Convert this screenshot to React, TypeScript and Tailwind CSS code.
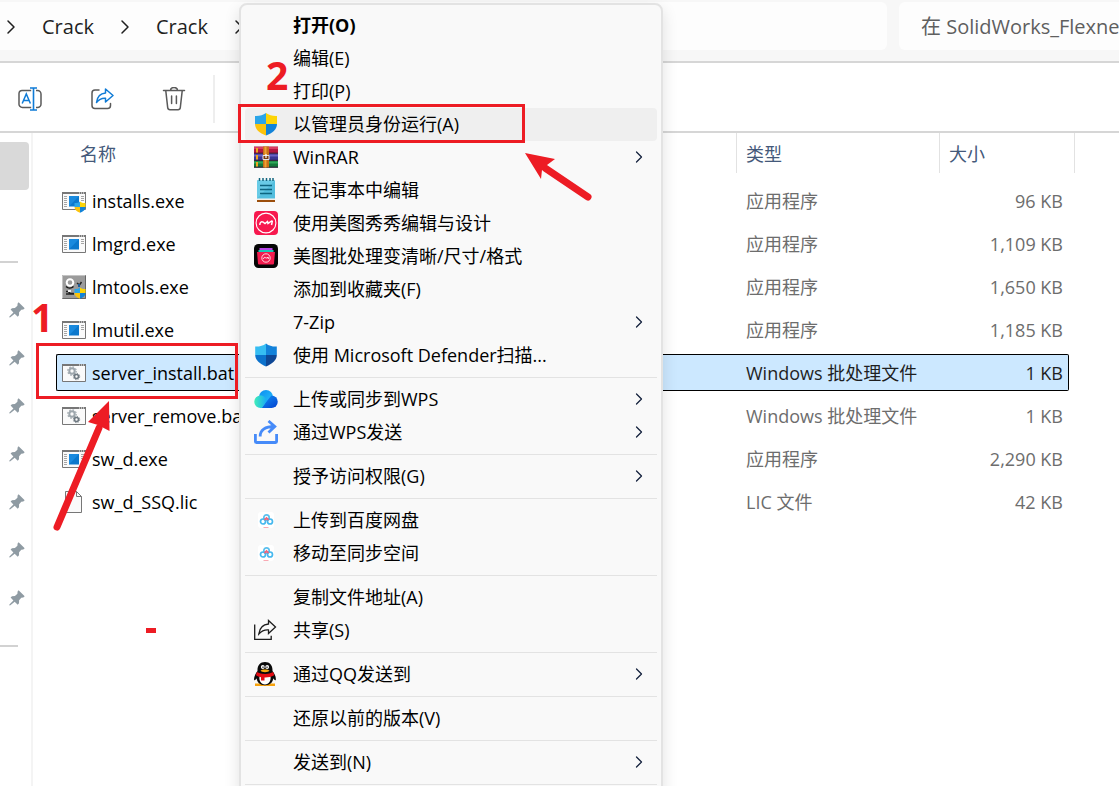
import { Fragment, ReactNode } from 'react'
import { ChevronRight } from 'lucide-react'
import clsx from 'clsx'

type FileRow = {
  name: string
  icon: ReactNode
  type: string
  size: string
  selected?: boolean
}

type MenuEntry = {
  label: string
  icon?: ReactNode
  bold?: boolean
  active?: boolean
  submenu?: boolean
}

/* ---------- toolbar icons ---------- */

function RenameIcon() {
  return (
    <svg viewBox="0 0 24 24" className="w-6 h-6" fill="none">
      <path d="M13.2 3.500H4.500A3 3 0 0 0 1 6.500v10A3.500 3.500 0 0 0 4.500 20.500h8.700" stroke="#5a5a5a" strokeWidth="1.500" />
      <path d="M18 3.500h1.500a3.500 3.500 0 0 1 3.500 3.500v10a3.500 3.500 0 0 1-3.500 3.500H18" stroke="#5a5a5a" strokeWidth="1.500" />
      <path d="M4.200 16.500 8.300 7l4.100 9.500M5.600 13.500h5.400" stroke="#0f7bd6" strokeWidth="1.500" />
      <path d="M12 1h7M12 23h7M15.500 1v22" stroke="#0f7bd6" strokeWidth="1.600" />
    </svg>
  )
}

function ShareIcon() {
  return (
    <svg viewBox="0 0 24 24" className="w-6 h-6" fill="none" strokeLinejoin="round" strokeLinecap="round">
      <path d="M9 3H5a3 3 0 0 0-3 3v12.500a3 3 0 0 0 3 3h12.500a3 3 0 0 0 3-3v-2" stroke="#5a5a5a" strokeWidth="1.500" />
      <path d="M15.500 2 23 8.500 15.500 15v-3.700c-3.700-.3-6.500 1-9 4.200.6-5.200 3.700-9.200 9-9.600V2Z" stroke="#0f7bd6" strokeWidth="1.500" />
    </svg>
  )
}

function TrashIcon() {
  return (
    <svg viewBox="0 0 24 24" className="w-6 h-6" fill="none" stroke="#5a5a5a" strokeWidth="1.500" strokeLinecap="round">
      <path d="M1.500 3.500h21M8.500 3.200a3.500 2.700 0 0 1 7 0" />
      <path d="m3.800 3.800 1.900 16.900a2.300 2.300 0 0 0 2.300 2h8a2.300 2.300 0 0 0 2.300-2l1.900-16.900" />
      <path d="M9.600 9v7.500M14.400 9v7.500" />
    </svg>
  )
}

function PinIcon() {
  return (
    <svg viewBox="0 0 16 16" className="w-4 h-4" fill="#8f9ba3">
      <path d="M9.600.3 15.700 6.200 14.300 7.400 12.300 7.800 10.100 10.300 10 13.300 8.700 14.700 5.700 11.700 1 15.600.300 15.200.400 14.600 4.400 10.400 1.600 7.500 3 6.200 5.900 6.100 8.400 3.700 8.600 1.500Z" />
    </svg>
  )
}

/* ---------- file icons ---------- */

function UacShield({ className }: { className?: string }) {
  return (
    <svg viewBox="0 0 24 24" className={className}>
      <path d="M12 1C9 3.200 5.500 4.200 1 4v8h11Z" fill="#2ba5e8" />
      <path d="M12 1c3 2.200 6.500 3.200 11 3v8H12Z" fill="#fdd406" />
      <path d="M1 12h11v11.500C5.500 21.200 1.200 17.500 1 12Z" fill="#fbc30d" />
      <path d="M23 12H12v11.500c6.500-2.300 10.800-6 11-11.500Z" fill="#1283d8" />
    </svg>
  )
}

function WindowFrame({ children }: { children?: ReactNode }) {
  return (
    <svg viewBox="0 0 24 24" className="w-6 h-6">
      <path d="M.5 3.500h23v17H.5Z" fill="#fafafa" stroke="#777" />
      <path d="M0 3h24v2H0Z" fill="#777" />
      <path d="M17 4h1M19 4h1M21 4h1" stroke="#fff" />
      {children}
    </svg>
  )
}

function ExeIcon({ shield }: { shield?: boolean }) {
  return (
    <span className="relative block w-6 h-6">
      <WindowFrame>
        <path d="M2 7.500h3M2 9.500h3M2 11.500h3M2 13.500h3M2 15.500h3M2 17.500h3M19 7.500h3M19 9.500h3M19 11.500h3" stroke="#a5a5a5" />
        <path d="M7 7h10v10.500H7Z" fill="#0c78cc" />
        <path d="M7 7h10L7 17.500Z" fill="#1a8ade" />
      </WindowFrame>
      {shield && <UacShield className="absolute right-0 bottom-0 w-3 h-3" />}
    </span>
  )
}

function BatIcon() {
  return (
    <WindowFrame>
      <circle cx="10" cy="10" r="2.700" fill="none" stroke="#9ea7ad" strokeWidth="2" />
      <circle cx="10" cy="10" r="4.200" fill="none" stroke="#9ea7ad" strokeWidth="1.200" strokeDasharray="1.600 1.700" />
      <circle cx="14.500" cy="15.500" r="2" fill="none" stroke="#6e7880" strokeWidth="1.600" />
      <circle cx="14.500" cy="15.500" r="3.200" fill="none" stroke="#6e7880" strokeWidth="1" strokeDasharray="1.200 1.300" />
    </WindowFrame>
  )
}

function ToolsIcon() {
  return (
    <span className="relative block w-6 h-6">
      <svg viewBox="0 0 24 24" className="w-6 h-6">
        <path d="M0 0h24v24H0Z" fill="#9b9b9b" />
        <path d="M.5 23.500V.5h23" fill="none" stroke="#c4c4c4" />
        <path d="M.5 23.500h23V.5" fill="none" stroke="#666" />
        <circle cx="8" cy="7.500" r="3.300" fill="none" stroke="#fff" strokeWidth="2" />
        <path d="M4 11.500a5.500 5.500 0 0 0 7.500 0" fill="none" stroke="#111" strokeWidth="1.500" />
        <path d="M4 16.500h2.500l1.500 2h4M4 19h8M15 8l2.500 2 2-3" fill="none" stroke="#222" strokeWidth="1.500" />
        <path d="M6 15h3v2H6Z" fill="#eee" />
        <path d="M17 9v3" stroke="#1f5d99" strokeWidth="2" />
      </svg>
      <UacShield className="absolute right-0 bottom-0 w-3 h-3" />
    </span>
  )
}

function DocIcon() {
  return (
    <svg viewBox="0 0 24 24" className="w-6 h-6">
      <path d="M3.500 1.500h11l5 5v16h-16Z" fill="#fafafa" stroke="#777" />
      <path d="M14.500 1.500v5h5" fill="none" stroke="#777" />
    </svg>
  )
}

/* ---------- menu icons ---------- */

function WinRarIcon() {
  return (
    <svg viewBox="0 0 24 24" className="w-6 h-6">
      <path d="M0 1.500h24v7H0Z" fill="#b3163f" />
      <path d="M0 2h24v2H0Z" fill="#d93c62" />
      <path d="M0 8.500h24v7H0Z" fill="#3a3594" />
      <path d="M0 9.500h24v2H0Z" fill="#6a63c4" />
      <path d="M0 15.500h24v7H0Z" fill="#14783a" />
      <path d="M0 16.500h24v2H0Z" fill="#2fa858" />
      <path d="M0 8.200h24M0 15.300h24M0 22.200h24" stroke="#2b1030" />
      <path d="M3 3v4.500M3 10v4.500M3 17v4.500" stroke="#f0a51d" strokeWidth="2" />
      <path d="M9 1.500h6v21H9Z" fill="#c8701b" />
      <path d="M10.500 1.500h2v21h-2Z" fill="#f0a233" />
      <path d="M9 10.500h6v4H9Z" fill="#7a3b12" stroke="#e6e6e6" strokeWidth="1" />
      <path d="M12 9v4" stroke="#fff" strokeWidth="1.200" />
    </svg>
  )
}

function NotepadIcon() {
  return (
    <svg viewBox="0 0 24 24" className="w-6 h-6">
      <path d="M3 21h18v3H3Z" fill="#9b4e0c" />
      <path d="M3 20.500h18v1.500H3Z" fill="#f1efe9" />
      <path d="M3 2.500h18v18H3Z" fill="#54bede" />
      <path d="M3 2.500h18L3 20.500Z" fill="#68cbe6" />
      <path d="M5.500 0v3M9 0v3M12.500 0v3M16 0v3M19 0v3" stroke="#12657f" strokeWidth="1.500" />
      <path d="M6 7.500h12M6 11.500h12M6 15.500h12" stroke="#0d6580" strokeWidth="1.600" />
    </svg>
  )
}

function MeituIcon() {
  return (
    <svg viewBox="0 0 24 24" className="w-6 h-6">
      <rect width="24" height="24" rx="4" fill="#f7184e" />
      <circle cx="12" cy="12" r="9.900" fill="none" stroke="#fff" strokeWidth="1.100" />
      <path d="M5.800 14c0-2.600 1.500-3.800 3.400-2.800l1.800 1.300 2.500-2 .5 2 3.500-2.500.8.300-.8 3.700" fill="none" stroke="#fff" strokeWidth="1.500" />
    </svg>
  )
}

function MeituBatchIcon() {
  return (
    <svg viewBox="0 0 24 24" className="w-6 h-6">
      <rect width="24" height="24" rx="4.500" fill="#060606" />
      <path d="M5.500 4h13v2h-13Z" fill="#b845e8" />
      <path d="M4.500 6h15v2h-15Z" fill="#18c9b8" />
      <path d="M3 8h18l-1 11.500a1 1 0 0 1-1 1H5a1 1 0 0 1-1-1Z" fill="#f21c4e" />
      <circle cx="12" cy="14" r="4.200" fill="none" stroke="#fff" strokeWidth=".8" />
      <path d="M9.500 15c.2-1.500 1-2 2-1.300l.8.300 2-.7v1.700" fill="none" stroke="#fff" strokeWidth=".9" />
    </svg>
  )
}

function DefenderIcon() {
  return (
    <svg viewBox="0 0 24 24" className="w-6 h-6">
      <path d="M12 .5C9 2.800 5.500 3.800 1.200 3.600V12H12Z" fill="#36bdf2" />
      <path d="M12 .5c3 2.300 6.500 3.300 10.800 3.100V12H12Z" fill="#1382da" />
      <path d="M1.200 12H12v11.500C5.700 20.800 1.400 17.500 1.200 12Z" fill="#0c72cc" />
      <path d="M22.800 12H12v11.500c6.300-2.700 10.600-6 10.800-11.500Z" fill="#0e4795" />
    </svg>
  )
}

function WpsCloudIcon() {
  return (
    <svg viewBox="0 0 24 24" className="w-6 h-6">
      <defs>
        <linearGradient id="cloudLeft" x1="0" y1="0" x2="1" y2="0">
          <stop offset="0" stopColor="#42efb9" />
          <stop offset="1" stopColor="#17a9f5" />
        </linearGradient>
        <linearGradient id="cloudTop" x1="0" y1="0" x2="1" y2="1">
          <stop offset="0" stopColor="#0b8df0" />
          <stop offset="1" stopColor="#29c3fb" />
        </linearGradient>
        <linearGradient id="cloudRight" x1="0" y1="0" x2="1" y2="1">
          <stop offset="0" stopColor="#1294f7" />
          <stop offset="1" stopColor="#0340cf" />
        </linearGradient>
      </defs>
      <circle cx="12" cy="10" r="7" fill="url(#cloudTop)" />
      <path d="M17.500 8.500a6.200 6.200 0 0 1 0 12.500H7Z" fill="url(#cloudRight)" />
      <path d="M6.500 8.500c3.500 0 6 2.500 6.300 5.500L8 21H6.500a6.250 6.250 0 0 1 0-12.500Z" fill="url(#cloudLeft)" />
    </svg>
  )
}

function WpsSendIcon() {
  return (
    <svg viewBox="0 0 24 24" className="w-6 h-6" fill="none" stroke="#468bf9" strokeWidth="2.800">
      <path d="M1.400 14v7.500a1 1 0 0 0 1 1h19.200a1 1 0 0 0 1-1V14" />
      <path d="M6.200 16.500C6 10 11 6.500 20.500 6.500M14.500 1l6.300 5.500-6.300 6" />
    </svg>
  )
}

function BaiduDiskIcon() {
  return (
    <svg viewBox="0 0 24 24" className="w-6 h-6" fill="none">
      <rect x="4" y="4" width="16" height="16" rx="3" fill="#fff" />
      <circle cx="12.500" cy="9.500" r="2.700" stroke="#5cc0ee" strokeWidth="1.700" />
      <circle cx="9" cy="13.500" r="2.500" stroke="#45b8ee" strokeWidth="1.700" />
      <circle cx="16" cy="13.500" r="2.500" stroke="#45b8ee" strokeWidth="1.700" />
      <path d="m10.500 12 2-2 2 2" stroke="#f0677c" strokeWidth="1.900" />
      <path d="M9.500 19.500h5" stroke="#f9aab4" />
    </svg>
  )
}

function MenuShareIcon() {
  return (
    <svg viewBox="0 0 24 24" className="w-6 h-6" fill="none" stroke="#1c1c1c" strokeWidth="1.300">
      <path d="M.7 6.500v14.800h16.500v-3.500" />
      <path d="M14.500 2.500 21.500 9l-7 6.500V12c-4-.3-7 1-9.700 4C5.500 10.500 9 6.500 14.500 6V2.500Z" />
    </svg>
  )
}

function QqIcon() {
  return (
    <svg viewBox="0 0 24 24" className="w-6 h-6">
      <path d="M1 21.500h20v2.500H1Z" fill="#f6a20d" />
      <path d="M11 0c5 0 7.800 3.500 7.500 9 2 2.500 4 6.500 3.200 9.300-1 .2-2-1-2.500-2-.3 4-3 7-8.200 7s-8-3-8.300-7c-.5 1-1.500 2.200-2.500 2C-.5 15.500 1.500 11.500 3.500 9 3.200 3.500 6 0 11 0Z" fill="#0a0a0a" />
      <path d="M5.500 14.500c0-2 11-2 11 0 .7 4-1.500 8-5.500 8s-6.200-4-5.500-8Z" fill="#fff" />
      <circle cx="8.800" cy="5" r="1.900" fill="#fff" />
      <circle cx="13.200" cy="5" r="1.900" fill="#fff" />
      <path d="M9 4.500v1.500M13 4.500v1.500" stroke="#000" />
      <path d="M6.500 8.500c1-1.500 8-1.500 9 0-1 2.200-8 2.200-9 0Z" fill="#f8a90f" />
      <path d="M2.800 10c4.500 2.500 12 2.500 16.400 0l1 3.300c-3 1.500-6 2.300-9.700 2.200v3H7v-3.300c-2-.4-3.700-1-5-1.900Z" fill="#e60b12" />
    </svg>
  )
}

/* ---------- data ---------- */

const files: FileRow[] = [
  { name: 'installs.exe', icon: <ExeIcon shield />, type: '应用程序', size: '96 KB' },
  { name: 'lmgrd.exe', icon: <ExeIcon />, type: '应用程序', size: '1,109 KB' },
  { name: 'lmtools.exe', icon: <ToolsIcon />, type: '应用程序', size: '1,650 KB' },
  { name: 'lmutil.exe', icon: <ExeIcon />, type: '应用程序', size: '1,185 KB' },
  { name: 'server_install.bat', icon: <BatIcon />, type: 'Windows 批处理文件', size: '1 KB', selected: true },
  { name: 'server_remove.bat', icon: <BatIcon />, type: 'Windows 批处理文件', size: '1 KB' },
  { name: 'sw_d.exe', icon: <ExeIcon />, type: '应用程序', size: '2,290 KB' },
  { name: 'sw_d_SSQ.lic', icon: <DocIcon />, type: 'LIC 文件', size: '42 KB' },
]

const menuGroups: MenuEntry[][] = [
  [
    { label: '打开(O)', bold: true },
    { label: '编辑(E)' },
    { label: '打印(P)' },
    { label: '以管理员身份运行(A)', icon: <UacShield className="w-6 h-6" />, active: true },
    { label: 'WinRAR', icon: <WinRarIcon />, submenu: true },
    { label: '在记事本中编辑', icon: <NotepadIcon /> },
    { label: '使用美图秀秀编辑与设计', icon: <MeituIcon /> },
    { label: '美图批处理变清晰/尺寸/格式', icon: <MeituBatchIcon /> },
    { label: '添加到收藏夹(F)' },
    { label: '7-Zip', submenu: true },
    { label: '使用 Microsoft Defender扫描...', icon: <DefenderIcon /> },
  ],
  [
    { label: '上传或同步到WPS', icon: <WpsCloudIcon />, submenu: true },
    { label: '通过WPS发送', icon: <WpsSendIcon />, submenu: true },
  ],
  [{ label: '授予访问权限(G)', submenu: true }],
  [
    { label: '上传到百度网盘', icon: <BaiduDiskIcon /> },
    { label: '移动至同步空间', icon: <BaiduDiskIcon /> },
  ],
  [{ label: '复制文件地址(A)' }, { label: '共享(S)', icon: <MenuShareIcon /> }],
  [{ label: '通过QQ发送到', icon: <QqIcon />, submenu: true }],
  [{ label: '还原以前的版本(V)' }],
  [{ label: '发送到(N)', submenu: true }],
]

/* ---------- layout ---------- */

function AddressBar() {
  return (
    <header className="flex gap-3 h-[63px] shrink-0 pt-0.5 pb-[11px] bg-[#f7f7f7] border-b-2 border-[#d6d6d6]">
      <nav className="flex flex-1 items-center gap-[19px] pt-0.5 bg-[#fdfdfd] rounded-r-md text-xl text-[#1f1f1f]">
        <ChevronRight className="w-6 h-6 -ml-px shrink-0" strokeWidth={1.5} />
        <a href="#crack">Crack</a>
        <ChevronRight className="w-6 h-6 shrink-0" strokeWidth={1.5} />
        <a href="#crack-inner">Crack</a>
        <ChevronRight className="w-6 h-6 shrink-0" strokeWidth={1.5} />
      </nav>
      <input
        type="text"
        aria-label="搜索"
        placeholder="在 SolidWorks_Flexne"
        className="w-[220px] pt-0.5 pl-[22px] bg-[#fdfdfd] rounded-l-md text-xl placeholder:text-[#5f5f5f] outline-none"
      />
    </header>
  )
}

function Toolbar() {
  return (
    <div className="flex items-center gap-12 h-[70px] shrink-0 pt-1 pl-[18px] bg-white border-b-2 border-[#d6d6d6]">
      <button aria-label="重命名"><RenameIcon /></button>
      <button aria-label="共享"><ShareIcon /></button>
      <button aria-label="删除"><TrashIcon /></button>
      <span className="-ml-[21px] w-0.5 h-12 bg-[#eeeeee]" />
    </div>
  )
}

function Sidebar() {
  return (
    <aside className="w-[33px] shrink-0 pt-[9px] border-r-2 border-[#f4f4f4]">
      <div className="mr-0.5 h-12 bg-[#d9d9d9] rounded-r-sm" />
      <hr className="mt-[71px] w-[18px] border-t-2 border-[#d2d2d2]" />
      <div className="flex flex-col gap-8 mt-[39px] pl-[9px]">
        {Array.from({ length: 7 }, (_, i) => (
          <PinIcon key={i} />
        ))}
      </div>
      <hr className="mt-[39px] w-[18px] border-t-2 border-[#d2d2d2]" />
    </aside>
  )
}

function FileTable() {
  return (
    <table className="w-full table-fixed border-collapse text-lg leading-6">
      <colgroup>
        <col />
        <col className="w-[203px]" />
        <col className="w-[135px]" />
        <col className="w-[45px]" />
      </colgroup>
      <thead>
        <tr className="h-[46px] text-left align-top text-[#44597a]">
          <th className="p-0 font-normal">
            <div className="flex items-center h-10 pt-0.5 pl-[47px]">名称</div>
          </th>
          <th className="p-0 font-normal">
            <div className="flex items-center h-10 pt-0.5 pl-[9px] border-l border-[#e2e2e2]">类型</div>
          </th>
          <th className="p-0 font-normal">
            <div className="flex items-center h-10 pt-0.5 pl-[9px] border-l border-[#e2e2e2]">大小</div>
          </th>
          <td className="p-0">
            <div className="h-10 border-l border-[#e2e2e2]" />
          </td>
        </tr>
      </thead>
      <tbody>
        {files.map((file) => (
          <tr key={file.name} className={file.selected ? 'text-[#1f1f1f]' : 'text-[#6d6d6d]'}>
            <td className="p-0 py-[3px]">
              <div
                className={clsx(
                  'flex items-center gap-1.5 h-[37px] ml-[23px] pl-[5px] border border-r-0 rounded-l-xs text-black',
                  file.selected ? 'bg-[#cce8ff] border-black' : 'border-transparent'
                )}
              >
                {file.icon}
                {file.name}
              </div>
            </td>
            <td className="p-0 py-[3px]">
              <div
                className={clsx(
                  'flex items-center h-[37px] pl-2.5 border-y',
                  file.selected ? 'bg-[#cce8ff] border-black' : 'border-transparent'
                )}
              >
                {file.type}
              </div>
            </td>
            <td className="p-0 py-[3px]">
              <div
                className={clsx(
                  'flex items-center justify-end h-[37px] mr-[5px] pr-[5px] border border-l-0 rounded-r-xs',
                  file.selected ? 'bg-[#cce8ff] border-black' : 'border-transparent'
                )}
              >
                {file.size}
              </div>
            </td>
            <td className="p-0" />
          </tr>
        ))}
      </tbody>
    </table>
  )
}

function ContextMenu() {
  return (
    <div
      role="menu"
      className="absolute left-[239px] top-[3px] w-[424px] p-1 bg-[#f9f9f9] border-2 border-[#e3e3e3] rounded-lg shadow-[0_6px_16px_rgba(0,0,0,0.12)] text-lg text-black"
    >
      {menuGroups.map((group, i) => (
        <Fragment key={i}>
          {group.map((item) => (
            <button
              key={item.label}
              role="menuitem"
              className={clsx(
                'flex items-center w-full h-[33px] pb-0.5 pl-[9px] pr-2 rounded text-left',
                item.active && 'bg-[#efefef]',
                item.bold && 'font-bold'
              )}
            >
              <span className="w-6 h-6 mr-[15px] shrink-0">{item.icon}</span>
              <span className="flex-1 whitespace-nowrap">{item.label}</span>
              {item.submenu && <ChevronRight className="w-5 h-5 text-[#14213d]" strokeWidth={1.5} />}
            </button>
          ))}
          <hr className="my-[5px] border-t border-[#e3e3e3]" />
        </Fragment>
      ))}
    </div>
  )
}

// Red marks drawn over the window to show the two steps
function StepMarks() {
  return (
    <div className="absolute inset-0 pointer-events-none text-[#ed1c24]">
      <div className="absolute left-9 top-[343px] w-[202px] h-14 border-3 border-[#ed1c24]" />
      <div className="absolute left-[238px] top-[104px] w-[287px] h-[39px] border-3 border-[#ed1c24]" />
      <span className="absolute left-[31px] top-[297px] text-[39px] leading-10 font-bold">1</span>
      <span className="absolute left-[266px] top-[55px] text-[39px] leading-10 font-bold">2</span>
      <div className="absolute left-[146px] top-[628px] w-2.5 h-[5px] bg-[#ed1c24]" />
      <svg className="absolute left-[50px] top-[400px] w-[70px] h-[134px]" viewBox="50 400 70 134">
        <path d="M57 527 99 428" stroke="#ed1c24" strokeWidth="7" strokeLinecap="round" />
        <path d="M109 401 109.500 431 98 425 88 422Z" fill="#ed1c24" />
      </svg>
      <svg className="absolute left-[522px] top-[150px] w-[74px] h-[54px]" viewBox="522 150 74 54">
        <path d="M588 197 545 168" stroke="#ed1c24" strokeWidth="7" strokeLinecap="round" />
        <path d="M525 153 555 159 547 165 542 170 541 179Z" fill="#ed1c24" />
      </svg>
    </div>
  )
}

export default function App() {
  return (
    <div className="relative flex flex-col h-screen overflow-hidden bg-white font-['Open_Sans','Noto_Sans_CJK_SC',sans-serif]">
      <AddressBar />
      <Toolbar />
      <div className="flex flex-1 min-h-0">
        <Sidebar />
        <main className="flex-1 min-w-0">
          <FileTable />
        </main>
      </div>
      <ContextMenu />
      <StepMarks />
    </div>
  )
}
